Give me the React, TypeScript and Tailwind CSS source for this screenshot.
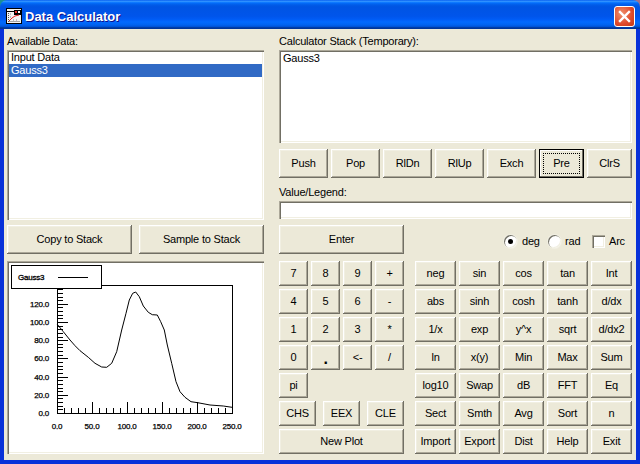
const raised =
  "shadow-[inset_-1px_-1px_0_#716f64,inset_1px_1px_0_#ffffff,inset_-2px_-2px_0_#aca899,inset_2px_2px_0_#f1efe2]";
const sunken =
  "shadow-[inset_1px_1px_0_#aca899,inset_2px_2px_0_#716f64,inset_-1px_-1px_0_#ffffff,inset_-2px_-2px_0_#f1efe2]";

const stackButtons = ["Push", "Pop", "RlDn", "RlUp", "Exch"];

const numberKeys = ["7", "8", "9", "+", "4", "5", "6", "-", "1", "2", "3", "*", "0", ".", "<-", "/"];

const funcKeys = [
  "neg", "sin", "cos", "tan", "Int",
  "abs", "sinh", "cosh", "tanh", "d/dx",
  "1/x", "exp", "y^x", "sqrt", "d/dx2",
  "ln", "x(y)", "Min", "Max", "Sum",
  "log10", "Swap", "dB", "FFT", "Eq",
  "Sect", "Smth", "Avg", "Sort", "n",
  "Import", "Export", "Dist", "Help", "Exit",
];

const curve =
  "57,324 63.3,331.7 70,340 75,345.7 80,350.7 88.3,357.3 95,363.3 101.7,367 106.7,367.3 111.7,363.3 116.7,351.7 121.7,330 126,313.3 129.3,300 132.7,293.3 135.7,292 139.3,296.7 143.3,306 148.3,312.3 152.3,314.7 157.3,315 160.7,321.7 164.3,330 167.3,345 171.7,363.3 176,381.7 180,391.7 185,397.3 191,401.7 197.7,402.7 210,405 223.3,406 232,407.3";

const Btn = ({ label, className = "" }: { label: string; className?: string }) => (
  <button className={`flex items-center justify-center bg-[#ece9d8] text-black ${raised} ${className}`}>{label}</button>
);

const Radio = ({ checked }: { checked?: boolean }) => (
  <span className="flex h-[13px] w-[13px] shrink-0 items-center justify-center rounded-full bg-white shadow-[inset_1px_1px_0_#716f64,inset_-1px_-1px_0_#f1efe2,0_0_0_1px_#f1efe2]">
    {checked && <span className="h-[5px] w-[5px] rounded-full bg-black" />}
  </span>
);

const WindowIcon = () => (
  <svg width="16" height="16" viewBox="0 0 16 16" className="mr-[3px] shrink-0">
    <rect x="0.5" y="0.5" width="15" height="15" fill="#f4f4f4" stroke="#000" />
    <path d="M1 3.5h14" stroke="#000" />
    <path d="M2.5 5v9M2.5 13.5h11" stroke="#555" strokeDasharray="1 1" />
    <rect x="8" y="2" width="7" height="5" fill="#000" />
    <rect x="9" y="3" width="2" height="2" fill="#f03030" />
    <rect x="12" y="3" width="2" height="2" fill="#fff" />
    <path d="M3 13l3-3 3-2 4-1" fill="none" stroke="#e02020" />
    <path d="M4 6h1M4 9h1M7 12h1M10 12h1" stroke="#888" />
  </svg>
);

const Plot = () => {
  const yMinor = Array.from({ length: 36 }, (_, i) => 413 - i * 3.64);
  const xMinor = Array.from({ length: 26 }, (_, i) => 57 + i * 7);
  const yLabels = ["0.0", "20.0", "40.0", "60.0", "80.0", "100.0", "120.0"];
  const xLabels = ["0.0", "50.0", "100.0", "150.0", "200.0", "250.0"];
  return (
    <svg viewBox="7 261 257 193" width="257" height="193" className="block font-['Liberation_Sans',sans-serif]">
      <rect x="57.5" y="285.5" width="175" height="128" fill="#fff" stroke="#000" />
      {yMinor.map((y, i) => (
        <path key={i} d={`M57 ${Math.round(y) + 0.5}H${i % 5 === 0 ? 68 : 63}`} stroke="#000" />
      ))}
      {xMinor.map((x, i) => (
        <path key={i} d={`M${x + 0.5} 413V${i % 5 === 0 ? 402 : 408}`} stroke="#000" />
      ))}
      <polyline points={curve} fill="none" stroke="#000" />
      {yLabels.map((t, i) => (
        <text key={t} x="49" y={416 - i * 18.2} textAnchor="end" fontSize="8" letterSpacing="-0.2" stroke="#000" strokeWidth="0.25">
          {t}
        </text>
      ))}
      {xLabels.map((t, i) => (
        <text key={t} x={57 + i * 35} y="428.5" textAnchor="middle" fontSize="8" letterSpacing="-0.2" stroke="#000" strokeWidth="0.25">
          {t}
        </text>
      ))}
      <rect x="11.5" y="265.5" width="90" height="23" fill="#fff" stroke="#000" />
      <text x="18" y="280" fontSize="8" letterSpacing="-0.2" stroke="#000" strokeWidth="0.3">
        Gauss3
      </text>
      <path d="M58 277.5H88" stroke="#000" />
    </svg>
  );
};

export default function App() {
  return (
    <div className="h-[464px] w-[640px] overflow-hidden bg-[linear-gradient(90deg,#1a8f96,#a0708c)] font-['Liberation_Sans',sans-serif] text-[11px] leading-none tracking-[-0.2px] text-black">
      <div className="flex h-full flex-col">
        <div className="flex h-[29px] items-center rounded-t-[7px] bg-[linear-gradient(to_bottom,#0058ee_0%,#3593ff_4%,#288eff_6%,#127dff_8%,#036ffc_10%,#0262ee_14%,#0057e5_20%,#0054e3_24%,#0055eb_56%,#005bf5_66%,#026afe_76%,#0062ef_86%,#0052d6_92%,#0040ab_94%,#003092_100%)] pl-[6px] pr-[5px] pt-[3px]">
          <WindowIcon />
          <span className="text-[13px] font-bold tracking-normal text-white [text-shadow:1px_1px_0_#0f1089]">Data Calculator</span>
          <button className="ml-auto flex h-[21px] w-[21px] items-center justify-center rounded-[3px] border border-white bg-[radial-gradient(circle_at_35%_35%,#f0926e,#e0492a_60%,#c23a14)]">
            <svg width="13" height="13" viewBox="0 0 13 13">
              <path d="M2 2l9 9M11 2l-9 9" stroke="#fff" strokeWidth="2.4" strokeLinecap="square" fill="none" />
            </svg>
          </button>
        </div>

        <div className="flex flex-1 gap-[15px] border-x-[4px] border-b-[4px] border-x-[#0831d9] border-b-[#0831d9] bg-[#ece9d8] pl-[3px] pr-[4px]">
          <div className="flex w-[257px] flex-col">
            <div className="flex h-[21px] items-center pt-[3px]">Available Data:</div>
            <div className={`h-[170px] bg-white px-[2px] pt-[1px] ${sunken}`}>
              <div className="flex h-[13px] items-center pl-[2px]">Input Data</div>
              <div className="flex h-[13px] items-center bg-[#316ac5] pl-[2px] text-white">Gauss3</div>
            </div>
            <div className="mt-[5px] flex justify-between">
              <Btn label="Copy to Stack" className="h-[29px] w-[125px]" />
              <Btn label="Sample to Stack" className="h-[29px] w-[125px]" />
            </div>
            <div className={`mt-[7px] h-[193px] bg-white ${sunken}`}>
              <Plot />
            </div>
          </div>

          <div className="flex w-[353px] flex-col">
            <div className="flex h-[21px] items-center pt-[3px]">Calculator Stack (Temporary):</div>
            <div className={`h-[93px] bg-white py-[3px] pl-[4px] ${sunken}`}>Gauss3</div>
            <div className="mt-[6px] flex gap-[3px]">
              {stackButtons.map((b) => (
                <Btn key={b} label={b} className="h-[29px] w-[49px]" />
              ))}
              <button className="relative flex h-[29px] w-[45px] items-center justify-center border border-black bg-[#ece9d8] shadow-[inset_-1px_-1px_0_#716f64,inset_1px_1px_0_#ffffff]">
                Pre
                <span className="absolute inset-[3px] border border-dotted border-black" />
              </button>
              <Btn label="ClrS" className="h-[29px] w-[45px]" />
            </div>
            <div className="flex h-[23px] items-end pb-[3px]">Value/Legend:</div>
            <div className={`h-[18px] bg-white ${sunken}`} />
            <div className="mt-[6px] flex">
              <Btn label="Enter" className="h-[29px] w-[125px]" />
              <div className="ml-[100px] flex h-[29px] items-center pt-[3px]">
                <Radio checked />
                <span className="ml-[5px] w-[26px]">deg</span>
                <Radio />
                <span className="ml-[4px] w-[27px]">rad</span>
                <span className={`h-[13px] w-[13px] shrink-0 bg-white ${sunken}`} />
                <span className="ml-[4px]">Arc</span>
              </div>
            </div>

            <div className="mt-[7px] flex gap-[11px]">
              <div className="flex w-[125px] flex-col gap-[3px]">
                <div className="grid grid-cols-[repeat(4,29px)] gap-[3px]">
                  {numberKeys.map((k) =>
                    k === "." ? (
                      <Btn key={k} label={k} className="h-[25px] pt-[3px] text-[16px] font-bold" />
                    ) : (
                      <Btn key={k} label={k} className="h-[25px]" />
                    )
                  )}
                  <Btn label="pi" className="h-[25px]" />
                </div>
                <div className="flex justify-between">
                  <Btn label="CHS" className="h-[25px] w-[37px]" />
                  <Btn label="EEX" className="h-[25px] w-[37px]" />
                  <Btn label="CLE" className="h-[25px] w-[37px]" />
                </div>
                <Btn label="New Plot" className="h-[25px] w-[125px]" />
              </div>
              <div className="grid w-[217px] grid-cols-[repeat(5,41px)] gap-[3px]">
                {funcKeys.map((k) => (
                  <Btn key={k} label={k} className="h-[25px]" />
                ))}
              </div>
            </div>
          </div>
        </div>
      </div>
    </div>
  );
}
